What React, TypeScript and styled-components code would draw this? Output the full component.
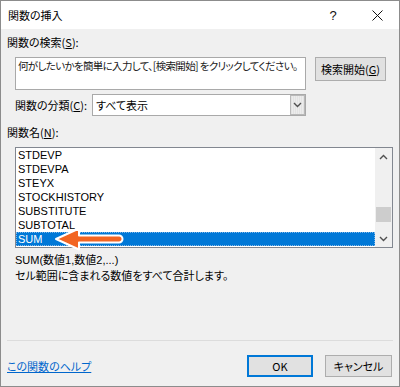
import React from 'react';
import styled, { createGlobalStyle } from 'styled-components';

const GlobalStyle = createGlobalStyle`
  html, body {
    margin: 0;
    padding: 0;
    background: #ffffff;
  }
  body {
    font-family: "Liberation Sans", "Noto Sans CJK JP", sans-serif;
    font-size: 11px;
    color: #000;
  }
  * {
    box-sizing: border-box;
  }
`;

const Window = styled.div`
  position: relative;
  width: 400px;
  height: 387px;
  border: 1px solid #8c8c8c;
  background: #f0f0f0;
  display: flex;
  flex-direction: column;
  overflow: hidden;
`;

const TitleBar = styled.div`
  height: 28px;
  flex-shrink: 0;
  background: #ffffff;
  display: flex;
  align-items: center;
  padding-left: 7px;
`;

const Title = styled.div`
  flex: 1;
  font-family: "Noto Sans CJK JP", sans-serif;
  font-size: 11px;
  font-feature-settings: "palt";
`;

const TitleButton = styled.div`
  width: 44px;
  height: 28px;
  display: flex;
  align-items: center;
  justify-content: center;
  font-size: 13px;
  color: #111;
`;

const Body = styled.div`
  flex: 1;
  display: flex;
  flex-direction: column;
  padding: 6px 6px 9px 6px;
`;

const Jp = styled.span`
  font-family: "Noto Sans CJK JP", sans-serif;
  font-feature-settings: "palt";
`;

const Label = styled.div<{ $indent?: number; $top?: number }>`
  line-height: 14px;
  margin-left: ${p => p.$indent ?? 0}px;
  margin-top: ${p => p.$top ?? 0}px;
  font-family: "Noto Sans CJK JP", sans-serif;
  font-feature-settings: "palt";
  white-space: nowrap;
`;

const SearchRow = styled.div`
  display: flex;
  align-items: flex-start;
  gap: 9px;
  margin: 8px 0 0 8px;
`;

const SearchBox = styled.div`
  width: 291px;
  height: 33px;
  background: #fff;
  border: 1px solid #a9a9a9;
  padding: 1px 2px;
  line-height: 13px;
  font-family: "Noto Sans CJK JP", sans-serif;
  font-feature-settings: "palt";
  font-size: 10.5px;
  letter-spacing: -0.65px;
  color: #1a1a1a;
  white-space: nowrap;
  overflow: hidden;
`;

const Button = styled.div<{ $w: number; $h: number; $default?: boolean }>`
  width: ${p => p.$w}px;
  height: ${p => p.$h}px;
  background: #e1e1e1;
  border: 1px solid ${p => (p.$default ? '#0078d7' : '#adadad')};
  box-shadow: ${p => (p.$default ? 'inset 0 0 0 1px #0078d7' : 'none')};
  display: flex;
  align-items: center;
  justify-content: center;
  font-family: "Noto Sans CJK JP", sans-serif;
  font-feature-settings: "palt";
  color: #000;
  white-space: nowrap;
`;

const CategoryRow = styled.div`
  display: flex;
  align-items: center;
  height: 22px;
  margin: 4px 0 0 8px;
`;

const CategoryLabel = styled(Label)`
  width: 77px;
`;

const Select = styled.div`
  width: 214px;
  height: 22px;
  background: #fff;
  border: 1px solid #a9a9a9;
  display: flex;
  align-items: stretch;
`;

const SelectValue = styled.div`
  flex: 1;
  display: flex;
  align-items: center;
  padding-left: 3px;
  font-family: "Noto Sans CJK JP", sans-serif;
  font-feature-settings: "palt";
`;

const SelectArrow = styled.div`
  width: 15px;
  border: 1px solid #b9b9b9;
  background: repeating-linear-gradient(90deg, #e3e3e3 0 1px, #ececec 1px 2px);
  display: flex;
  align-items: center;
  justify-content: center;
`;

const ListBox = styled.div`
  margin: 8px 0 0 8px;
  height: 101px;
  border: 1px solid #828790;
  background: #fff;
  display: flex;
`;

const Rows = styled.div`
  flex: 1;
`;

const Row = styled.div<{ $selected?: boolean }>`
  height: 14px;
  line-height: 14px;
  padding-left: 2px;
  background: ${p => (p.$selected ? '#0078d7' : 'transparent')};
  color: ${p => (p.$selected ? '#fff' : '#000')};
  outline: ${p => (p.$selected ? '1px dotted #7fb6e8' : 'none')};
  outline-offset: -1px;
`;

const ScrollBar = styled.div`
  width: 17px;
  background: #f0f0f0;
  display: flex;
  flex-direction: column;
`;

const ScrollButton = styled.div`
  height: 17px;
  display: flex;
  align-items: center;
  justify-content: center;
`;

const Track = styled.div`
  flex: 1;
`;

const Thumb = styled.div`
  margin: 42px 0 0 1px;
  width: 15px;
  height: 15px;
  background: #cdcdcd;
`;

const Info = styled.div`
  margin: 4px 0 0 8px;
  line-height: 15px;
`;

const Separator = styled.div`
  margin-top: auto;
  height: 1px;
  background: #dcdcdc;
`;

const Footer = styled.div`
  margin-top: 14px;
  display: flex;
  align-items: center;
  gap: 12px;
  padding-right: 1px;
`;

const HelpLink = styled.a`
  flex: 1;
  color: #0066cc;
  text-decoration: underline;
  font-family: "Noto Sans CJK JP", sans-serif;
  font-feature-settings: "palt";
  cursor: pointer;
`;

const Arrow = styled.svg`
  position: absolute;
  left: 50px;
  top: 223px;
`;

const Chevron = ({ up }: { up?: boolean }) => (
  <svg width="9" height="6" viewBox="0 0 9 6">
    <path
      d={up ? 'M1 5 L4.5 1.5 L8 5' : 'M1 1 L4.5 4.5 L8 1'}
      fill="none"
      stroke="#505050"
      strokeWidth="1.4"
    />
  </svg>
);

const items = ['STDEVP', 'STDEVPA', 'STEYX', 'STOCKHISTORY', 'SUBSTITUTE', 'SUBTOTAL', 'SUM'];

export default function App() {
  return (
    <>
      <GlobalStyle />
      <Window>
        <TitleBar>
          <Title>関数の挿入</Title>
          <TitleButton>?</TitleButton>
          <TitleButton>
            <svg width="11" height="11" viewBox="0 0 11 11">
              <path d="M0.5 0.5 L10.5 10.5 M10.5 0.5 L0.5 10.5" stroke="#111" strokeWidth="1" />
            </svg>
          </TitleButton>
        </TitleBar>
        <Body>
          <Label>
            関数の検索(<u>S</u>):
          </Label>
          <SearchRow>
            <SearchBox>何がしたいかを簡単に入力して、[検索開始] をクリックしてください。</SearchBox>
            <Button $w={71} $h={24}>
              検索開始(<u>G</u>)
            </Button>
          </SearchRow>
          <CategoryRow>
            <CategoryLabel>
              関数の分類(<u>C</u>):
            </CategoryLabel>
            <Select>
              <SelectValue>すべて表示</SelectValue>
              <SelectArrow>
                <Chevron />
              </SelectArrow>
            </Select>
          </CategoryRow>
          <Label $top={9}>
            関数名(<u>N</u>):
          </Label>
          <ListBox>
            <Rows>
              {items.map(name => (
                <Row key={name} $selected={name === 'SUM'}>
                  {name}
                </Row>
              ))}
            </Rows>
            <ScrollBar>
              <ScrollButton>
                <Chevron up />
              </ScrollButton>
              <Track>
                <Thumb />
              </Track>
              <ScrollButton>
                <Chevron />
              </ScrollButton>
            </ScrollBar>
          </ListBox>
          <Info>
            SUM(<Jp>数値</Jp>1,<Jp>数値</Jp>2,...)
            <br />
            <Jp>セル範囲に含まれる数値をすべて合計します。</Jp>
          </Info>
          <Separator />
          <Footer>
            <HelpLink>この関数のヘルプ</HelpLink>
            <Button $w={66} $h={22} $default>
              OK
            </Button>
            <Button $w={67} $h={22}>
              キャンセル
            </Button>
          </Footer>
        </Body>
        <Arrow width="76" height="30" viewBox="0 0 76 30">
          <path
            d="M5 15 L28 4.5 L28 11.5 L68 11.5 A3.5 3.5 0 0 1 68 18.5 L28 18.5 L28 25.5 Z"
            fill="#f26522"
            stroke="#ffffff"
            strokeWidth="2"
            strokeLinejoin="round"
          />
        </Arrow>
      </Window>
    </>
  );
}
